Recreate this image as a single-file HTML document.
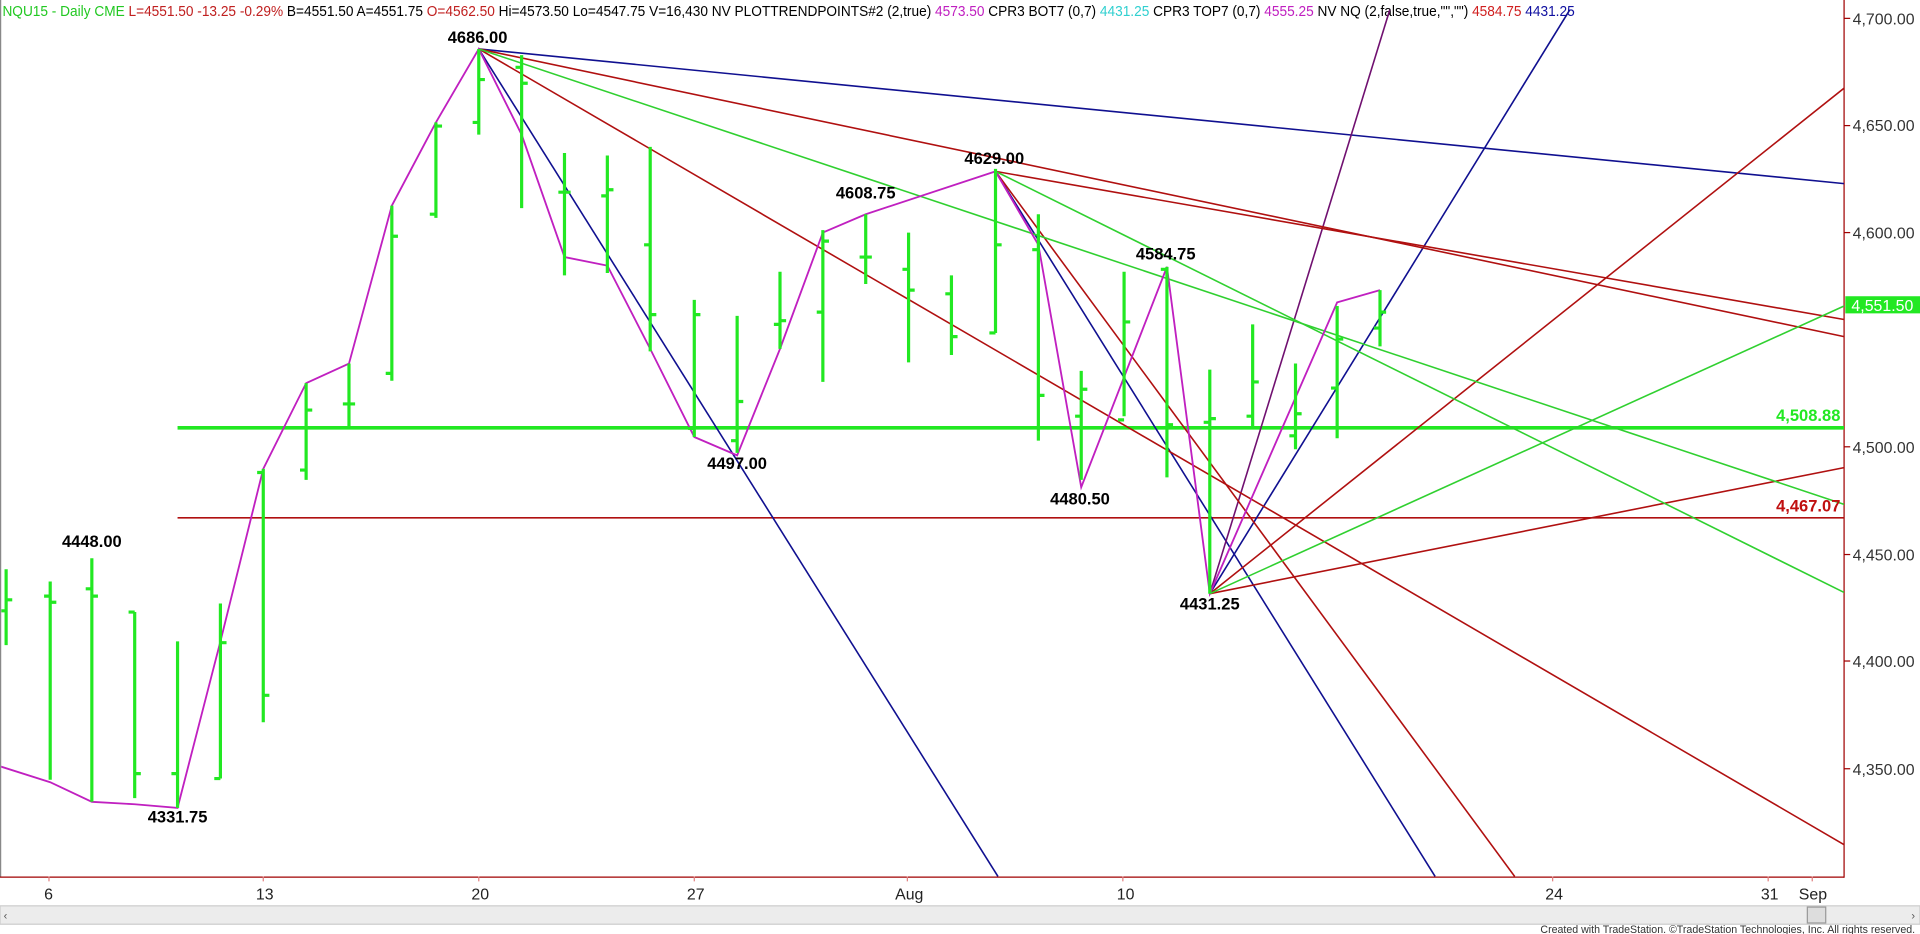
<!DOCTYPE html>
<html><head><meta charset="utf-8"><style>
html,body{margin:0;padding:0;background:#fff;overflow:hidden}
svg{display:block}
text{font-family:"Liberation Sans",Arial,sans-serif}
</style></head><body>
<svg width="1920" height="934" viewBox="0 0 1568 763" preserveAspectRatio="none">
<rect x="0" y="0" width="1568" height="763" fill="#fff"/>
<line x1="0.5" y1="0" x2="0.5" y2="716" stroke="#888" stroke-width="1"/>
<line x1="1506" y1="0" x2="1506" y2="717" stroke="#a00000" stroke-width="1"/>
<line x1="0" y1="716.5" x2="1506" y2="716.5" stroke="#a00000" stroke-width="1"/>
<!-- header -->
<text x="2" y="13" font-size="12" textLength="1284" lengthAdjust="spacingAndGlyphs"><tspan fill="#22c822">NQU15 - Daily  CME  </tspan><tspan fill="#c02020">L=4551.50  -13.25  -0.29%  </tspan><tspan fill="#000">B=4551.50  A=4551.75  </tspan><tspan fill="#c02020">O=4562.50  </tspan><tspan fill="#000">Hi=4573.50  Lo=4547.75  V=16,430  NV  PLOTTRENDPOINTS#2 (2,true)   </tspan><tspan fill="#c020c0">4573.50  </tspan><tspan fill="#000">CPR3 BOT7 (0,7)   </tspan><tspan fill="#30d0d0">4431.25  </tspan><tspan fill="#000">CPR3 TOP7 (0,7)   </tspan><tspan fill="#c020c0">4555.25  </tspan><tspan fill="#000">NV NQ (2,false,true,"","")   </tspan><tspan fill="#d02020">4584.75  </tspan><tspan fill="#1010a0">4431.25</tspan></text>
<!-- right axis -->
<g font-size="13" fill="#333">
<line x1="1506" y1="15" x2="1511" y2="15" stroke="#a00000"/><text x="1513" y="20">4,700.00</text>
<line x1="1506" y1="102.6" x2="1511" y2="102.6" stroke="#a00000"/><text x="1513" y="107">4,650.00</text>
<line x1="1506" y1="190" x2="1511" y2="190" stroke="#a00000"/><text x="1513" y="195">4,600.00</text>
<line x1="1506" y1="365" x2="1511" y2="365" stroke="#a00000"/><text x="1513" y="370">4,500.00</text>
<line x1="1506" y1="453" x2="1511" y2="453" stroke="#a00000"/><text x="1513" y="458">4,450.00</text>
<line x1="1506" y1="540" x2="1511" y2="540" stroke="#a00000"/><text x="1513" y="545">4,400.00</text>
<line x1="1506" y1="628" x2="1511" y2="628" stroke="#a00000"/><text x="1513" y="633">4,350.00</text>
</g>
<rect x="1507" y="242" width="61" height="14" fill="#22e822"/>
<text x="1512" y="254" font-size="13" fill="#fff">4,551.50</text>
<!-- date axis -->
<g font-size="13" fill="#222">
<text x="36" y="735">6</text><text x="209" y="735">13</text><text x="385" y="735">20</text><text x="561" y="735">27</text>
<text x="731" y="735">Aug</text><text x="912" y="735">10</text><text x="1262" y="735">24</text><text x="1438" y="735">31</text><text x="1469" y="735">Sep</text>
</g>
<g stroke="#e08080" stroke-width="1">
<line x1="40" y1="716" x2="40" y2="720"/><line x1="215" y1="716" x2="215" y2="720"/><line x1="391" y1="716" x2="391" y2="720"/><line x1="567" y1="716" x2="567" y2="720"/><line x1="741" y1="716" x2="741" y2="720"/><line x1="917" y1="716" x2="917" y2="720"/><line x1="1268" y1="716" x2="1268" y2="720"/><line x1="1444" y1="716" x2="1444" y2="720"/><line x1="1480" y1="716" x2="1480" y2="720"/>
</g>
<!-- scrollbar -->
<rect x="0" y="740" width="1568" height="15" fill="#ececec" stroke="#ccc"/>
<rect x="1476" y="741" width="15" height="13" fill="#ddd" stroke="#999"/>
<text x="3" y="751" font-size="9" fill="#555">‹</text><text x="1561" y="751" font-size="9" fill="#555">›</text>
<text x="1258" y="762" font-size="9" fill="#333" textLength="306" lengthAdjust="spacingAndGlyphs">Created with TradeStation. ©TradeStation Technologies, Inc. All rights reserved.</text>
<defs><clipPath id="c"><rect x="1" y="0" width="1505" height="716"/></clipPath></defs>
<g clip-path="url(#c)">
<line x1="145" y1="349.5" x2="1506" y2="349.5" stroke="#22e822" stroke-width="3"/>
<line x1="145" y1="423" x2="1506" y2="423" stroke="#b01010" stroke-width="1.3"/>
<g fill="none" stroke-width="1.3">
<line x1="391" y1="40" x2="1506" y2="150" stroke="#101090"/>
<line x1="391" y1="40" x2="815" y2="716" stroke="#101090"/>
<line x1="813" y1="140" x2="1172" y2="716" stroke="#101090"/>
<line x1="988" y1="485" x2="1282" y2="8" stroke="#101090"/>
<line x1="988" y1="485" x2="1135" y2="8" stroke="#701070"/>
<line x1="391" y1="40" x2="1506" y2="275" stroke="#b01010"/>
<line x1="813" y1="140" x2="1506" y2="261" stroke="#b01010"/>
<line x1="391" y1="40" x2="1506" y2="690" stroke="#b01010"/>
<line x1="813" y1="140" x2="1237" y2="716" stroke="#b01010"/>
<line x1="988" y1="485" x2="1506" y2="72" stroke="#b01010"/>
<line x1="988" y1="485" x2="1506" y2="382" stroke="#b01010"/>
<line x1="391" y1="40" x2="1506" y2="412" stroke="#30d030"/>
<line x1="813" y1="140" x2="1506" y2="484" stroke="#30d030"/>
<line x1="988" y1="485" x2="1506" y2="250" stroke="#30d030"/>
</g>
<polyline fill="none" stroke="#c020c0" stroke-width="1.5" points="0,626 41,639 75,655 110,657 145,660 180,524 215,383 250,313 285,297 320,168 356,100 391,40 426,110 461,210 496,217 531,285 567,357 602,372 637,285 672,190 707,175 813,140 848,200 883,398 953,218 988,485 1092,247 1127,237"/>
<g stroke="#22e822" stroke-width="2.6" fill="none">
<path d="M5 465V527M5 490h5M1 499h4"/>
<path d="M41 475V637M41 492h5M36 487h5"/>
<path d="M75 456V655M75 487h5M70 481h5"/>
<path d="M110 500V652M110 632h5M105 500h5"/>
<path d="M145 524V660M145 632h-5"/>
<path d="M180 493V636M180 525h5M175 636h5"/>
<path d="M215 383V590M215 386h-5M215 568h5"/>
<path d="M250 313V392M250 335h5M245 384h5"/>
<path d="M285 297V349M285 330h5M280 330h5"/>
<path d="M320 168V311M320 193h5M315 305h5"/>
<path d="M356 100V178M356 103h5M351 175h5"/>
<path d="M391 40V110M391 65h5M386 100h5"/>
<path d="M426 45V170M426 68h5M421 55h5"/>
<path d="M461 125V225M461 157h5M456 157h5"/>
<path d="M496 127V223M496 155h5M491 160h5"/>
<path d="M531 120V287M531 257h5M526 200h5"/>
<path d="M567 245V357M567 257h5M562 350h5"/>
<path d="M602 258V370M602 328h5M597 360h5"/>
<path d="M637 222V285M637 262h5M632 265h5"/>
<path d="M672 188V312M672 197h5M667 255h5"/>
<path d="M707 175V232M707 210h5M702 210h5"/>
<path d="M742 190V296M742 237h5M737 220h5"/>
<path d="M777 225V290M777 275h5M772 240h5"/>
<path d="M813 138V272M813 200h5M808 272h5"/>
<path d="M848 175V360M848 323h5M843 204h5"/>
<path d="M883 303V392M883 318h5M878 340h5"/>
<path d="M918 222V340M918 263h5M913 343h5"/>
<path d="M953 218V390M953 347h5M948 220h5"/>
<path d="M988 302V485M988 342h5M983 345h5"/>
<path d="M1023 265V350M1023 312h5M1018 340h5"/>
<path d="M1058 297V367M1058 338h5M1053 356h5"/>
<path d="M1092 250V358M1092 277h5M1087 317h5"/>
<path d="M1127 237V283M1127 255h5M1122 268h5"/>
</g>
<g font-size="13.5" font-weight="bold" fill="#000" text-anchor="middle">
<text x="390" y="35">4686.00</text>
<text x="812" y="134">4629.00</text>
<text x="707" y="162">4608.75</text>
<text x="952" y="212">4584.75</text>
<text x="602" y="383">4497.00</text>
<text x="882" y="412">4480.50</text>
<text x="988" y="498">4431.25</text>
<text x="75" y="447">4448.00</text>
<text x="145" y="672">4331.75</text>
</g>
<text x="1503" y="344" font-size="13.5" font-weight="bold" fill="#22e822" text-anchor="end">4,508.88</text>
<text x="1503" y="418" font-size="13.5" font-weight="bold" fill="#c01010" text-anchor="end">4,467.07</text>
</g>
</svg>
</body></html>
